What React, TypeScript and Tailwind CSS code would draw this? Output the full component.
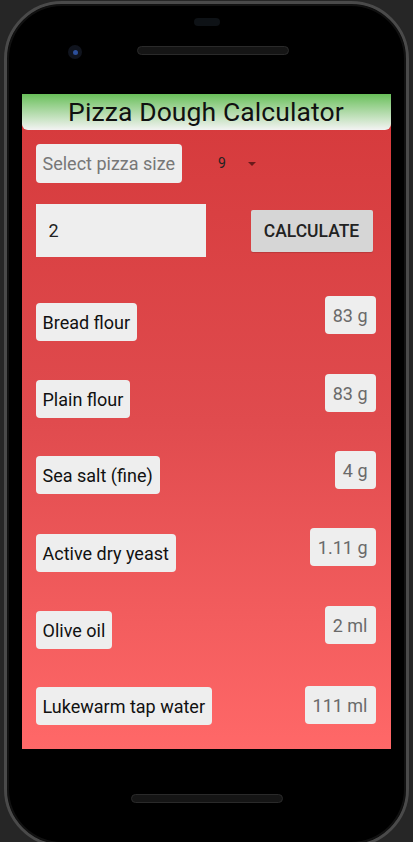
import { useState } from "react";

const rows = [
  { label: "Bread flour", value: "83 g", lm: "mt-[7px]", vm: "mt-0" },
  { label: "Plain flour", value: "83 g", lm: "mt-[7px]", vm: "mt-[1px]" },
  { label: "Sea salt (fine)", value: "4 g", lm: "mt-[6px]", vm: "mt-[1px]" },
  { label: "Active dry yeast", value: "1.11 g", lm: "mt-[7px]", vm: "mt-[1px]" },
  { label: "Olive oil", value: "2 ml", lm: "mt-[7px]", vm: "mt-[2px]" },
  { label: "Lukewarm tap water", value: "111 ml", lm: "mt-[6px]", vm: "mt-[5px]" },
];

function App() {
  const [count, setCount] = useState("2");

  return (
    <div className="w-[413px] h-[842px] bg-[#262626] overflow-hidden font-['Roboto',sans-serif]">
      {/* phone body */}
      <div className="mx-[4px] mt-[1px] h-[846px] rounded-[58px] border-[3px] border-[#4a4a4a] bg-black flex flex-col items-center shadow-[inset_0_0_0_2px_#111]">
        {/* top bezel */}
        <div className="w-full h-[90px] shrink-0 flex flex-col items-center">
          <div className="mt-[14px] w-[26px] h-[8px] rounded-full bg-[#0e1216]" />
          <div className="mt-[16px] w-full flex items-center">
            <div className="ml-[61px] mt-[3px] w-[14px] h-[14px] rounded-full bg-[#10141e] flex items-center justify-center">
              <div className="w-[5px] h-[5px] rounded-full bg-[#2c4f9a]" />
            </div>
            <div className="ml-[55px] w-[152px] h-[9px] rounded-full bg-[#151515] border border-[#2a2a2a]" />
          </div>
        </div>

        {/* screen */}
        <div className="-ml-[1px] w-[369px] h-[655px] shrink-0 overflow-hidden flex flex-col bg-gradient-to-b from-[#d5393b] via-[#e04b4e] to-[#ff6868]">
          <div className="h-[36px] shrink-0 rounded-b-[6px] bg-gradient-to-b from-[#68bf59] to-[#f3f3f3] flex items-center justify-center">
            <span className="text-[26.5px] leading-none text-[#111] tracking-[0.1px]">Pizza Dough Calculator</span>
          </div>

          <div className="px-[14px] pt-[14px] flex flex-col">
            <div className="flex items-center">
              <div className="h-[39px] px-[7px] rounded-[4px] bg-[#eeeeee] flex items-center text-[18px] text-[#777]">
                Select pizza size
              </div>
              <span className="ml-[36px] text-[14px] text-[#222]">9</span>
              <svg className="ml-[21px]" width="10" height="6" viewBox="0 0 10 6">
                <path d="M1 1h8L5 5z" fill="#6b1a1a" />
              </svg>
            </div>

            <div className="mt-[21px] flex items-start justify-between pr-[4px]">
              <input
                value={count}
                onChange={(e) => setCount(e.target.value)}
                className="w-[170px] h-[53px] bg-[#eeeeee] px-[13px] text-[18px] text-[#222] outline-none"
              />
              <button className="mt-[6px] w-[122px] h-[42px] rounded-[2px] bg-[#d6d6d6] text-[17.5px] font-medium text-[#222] shadow-[0_1px_1px_rgba(0,0,0,0.15)]">
                CALCULATE
              </button>
            </div>

            <div className="mt-[39px] flex flex-col pr-[1px]">
              {rows.map((r) => (
                <div key={r.label} className="h-[77px] shrink-0 flex items-start justify-between">
                  <div className={`${r.lm} h-[38px] px-[7px] rounded-[4px] bg-[#eeeeee] flex items-center text-[18px] text-[#111]`}>
                    {r.label}
                  </div>
                  <div className={`${r.vm} h-[38px] px-[8px] rounded-[4px] bg-[#eeeeee] flex items-center text-[18px] text-[#6a6a6a]`}>
                    {r.value}
                  </div>
                </div>
              ))}
            </div>
          </div>
        </div>

        {/* bottom bezel */}
        <div className="mt-[45px] w-[152px] h-[9px] rounded-full bg-[#151515] border border-[#2a2a2a]" />
      </div>
    </div>
  );
}

export default App;
